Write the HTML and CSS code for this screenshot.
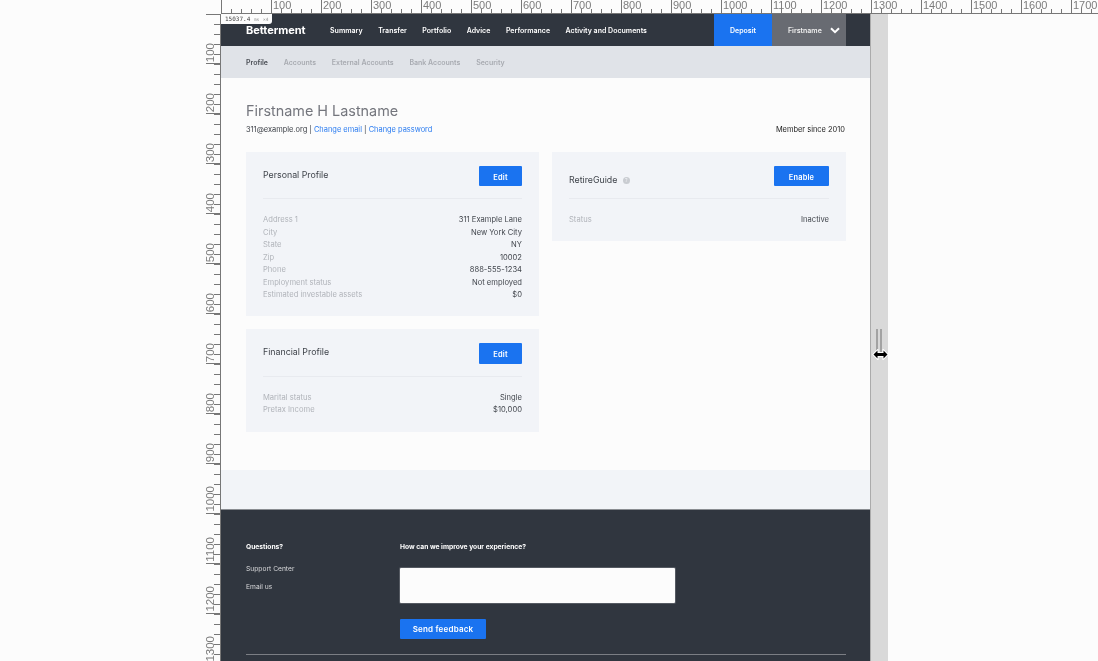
FILE: index.html
```html
<!DOCTYPE html>
<html lang="en">
<head>
<meta charset="utf-8">
<title>Profile</title>
<link rel="stylesheet" href="styles.css">
</head>
<body>
<div class="screen">
  <div class="corner"></div>
  <div class="ruler-top">
    <span class="rt"></span><span class="rt">100</span><span class="rt">200</span><span class="rt">300</span><span class="rt">400</span><span class="rt">500</span><span class="rt">600</span><span class="rt">700</span><span class="rt">800</span><span class="rt">900</span><span class="rt">1000</span><span class="rt">1100</span><span class="rt">1200</span><span class="rt">1300</span><span class="rt">1400</span><span class="rt">1500</span><span class="rt">1600</span><span class="rt">1700</span>
  </div>
  <div class="ruler-left">
    <span class="rl rl-zero"><b>100</b></span><span class="rl"><b>200</b></span><span class="rl"><b>300</b></span><span class="rl"><b>400</b></span><span class="rl"><b>500</b></span><span class="rl"><b>600</b></span><span class="rl"><b>700</b></span><span class="rl"><b>800</b></span><span class="rl"><b>900</b></span><span class="rl"><b>1000</b></span><span class="rl"><b>1100</b></span><span class="rl"><b>1200</b></span><span class="rl"><b>1300</b></span>
  </div>
  <div class="app">
    <div class="badge">15037.4 <i>ms</i> <i>×4</i></div>
    <header class="topbar">
      <div class="logo">Betterment</div>
      <nav class="nav"><a>Summary</a><a>Transfer</a><a>Portfolio</a><a>Advice</a><a>Performance</a><a>Activity and Documents</a></nav>
      <a class="deposit">Deposit</a>
      <a class="user">Firstname
        <svg class="chev" width="10" height="7" viewBox="0 0 10 7"><path d="M1 1.2 5 5.2 9 1.2" fill="none" stroke="#fff" stroke-width="2"/></svg>
      </a>
    </header>
    <div class="subnav"><a class="on">Profile</a><a>Accounts</a><a>External Accounts</a><a>Bank Accounts</a><a>Security</a></div>
    <main class="main">
      <h1 class="name">Firstname H Lastname</h1>
      <div class="meta">
        <div>311@example.org | <a>Change email</a> | <a>Change password</a></div>
        <div class="since">Member since 2010</div>
      </div>
      <div class="cols">
        <div class="col">
          <section class="card">
            <div class="card-head"><h2>Personal Profile</h2><button class="btn">Edit</button></div>
            <dl class="rows">
              <div class="row"><dt>Address 1</dt><dd>311 Example Lane</dd></div>
              <div class="row"><dt>City</dt><dd>New York City</dd></div>
              <div class="row"><dt>State</dt><dd>NY</dd></div>
              <div class="row"><dt>Zip</dt><dd>10002</dd></div>
              <div class="row"><dt>Phone</dt><dd>888-555-1234</dd></div>
              <div class="row"><dt>Employment status</dt><dd>Not employed</dd></div>
              <div class="row"><dt>Estimated investable assets</dt><dd>$0</dd></div>
            </dl>
          </section>
          <section class="card card-fin">
            <div class="card-head tall"><h2>Financial Profile</h2><button class="btn">Edit</button></div>
            <dl class="rows">
              <div class="row"><dt>Marital status</dt><dd>Single</dd></div>
              <div class="row"><dt>Pretax Income</dt><dd>$10,000</dd></div>
            </dl>
          </section>
        </div>
        <div class="col">
          <section class="card">
            <div class="card-head"><h2 class="low">RetireGuide <span class="help">?</span></h2><button class="btn wide">Enable</button></div>
            <dl class="rows">
              <div class="row"><dt>Status</dt><dd>Inactive</dd></div>
            </dl>
          </section>
        </div>
      </div>
    </main>
    <div class="strip"></div>
    <footer class="footer">
      <div class="foot-left">
        <h3>Questions?</h3>
        <a>Support Center</a>
        <a>Email us</a>
      </div>
      <div class="foot-right">
        <h3>How can we improve your experience?</h3>
        <div class="textarea"></div>
        <button class="btn send">Send feedback</button>
      </div>
      <div class="foot-line"></div>
    </footer>
  </div>
  <div class="gutter">
    <div class="handle"><span></span><span></span></div>
    <svg class="cursor" width="17" height="11" viewBox="0 0 17 11"><path d="M1.5 5.5 5.5 1.5V4H11.5V1.5L15.5 5.5 11.5 9.5V7H5.5V9.5Z" fill="#000" stroke="#fff" stroke-width="2" paint-order="stroke"/></svg>
  </div>
  <div class="blank"></div>
</div>
</body>
</html>
```
FILE: styles.css
```css
* { box-sizing: border-box; }
html, body { margin: 0; height: 100%; overflow: hidden; background: #fcfcfc; }
body { font-family: Inter, "Liberation Sans", sans-serif; }
h1, h2, h3, dl, dd, dt { margin: 0; font-weight: inherit; font-size: inherit; }
button { border: 0; font-family: inherit; padding: 0; }

.screen {
  display: grid;
  grid-template-columns: 221px 649px 18px 1fr;
  grid-template-rows: 14px 647px;
  width: 1098px;
  height: 661px;
  overflow: hidden;
  will-change: transform;
}

/* Rulers */
.corner { background: #fcfcfc; }
.ruler-top {
  grid-column: 2 / 5;
  display: flex;
  border-bottom: 1px solid #777;
  background: repeating-linear-gradient(90deg, #777 0 1px, transparent 1px 10px) bottom left / 100% 4px no-repeat;
  overflow: hidden;
}
.rt {
  flex: 0 0 50px;
  border-left: 1px solid #777;
  padding-left: 1px;
  font: 11px/11px "Liberation Sans", sans-serif;
  color: #7c7c7c;
  height: 13px;
}
.ruler-left {
  display: flex;
  flex-direction: column;
  border-right: 1px solid #777;
  height: 661px;
  overflow: hidden;
  background: repeating-linear-gradient(180deg, #777 0 1px, transparent 1px 10px) top right / 6px 100% no-repeat;
}
.rl {
  flex: 0 0 50px;
  display: flex;
  justify-content: flex-end;
  align-items: flex-end;
  padding-right: 4px;
  border-bottom: 1px solid #777;
  margin-left: 206px;
  width: 14px;
}
.rl-zero { border-top: 1px solid #777; }
.rl b {
  writing-mode: vertical-rl;
  transform: rotate(180deg);
  font: 400 11.5px/11px "Liberation Sans", sans-serif;
  color: #7c7c7c;
  padding-top: 1px;
}

/* App */
.app { position: relative; display: flex; flex-direction: column; background: #fcfcfc; }
.badge {
  position: absolute;
  left: 0; top: 0;
  width: 51px; height: 10px;
  background: #fcfcfc;
  border-bottom-right-radius: 3px;
  font: 6px/10px "DejaVu Sans Mono", monospace;
  color: #444;
  padding-left: 4px;
  white-space: nowrap;
}
.badge i { font-style: normal; color: #999; font-size: 4.5px; }
.topbar {
  flex: 0 0 32px;
  background: #30363f;
  display: flex;
  align-items: center;
  padding-left: 25px;
  padding-right: 24px;
  color: #fff;
  font-weight: 600;
}
.logo { font-size: 11px; font-weight: 700; width: 84px; letter-spacing: -.05px; }
.nav { display: flex; gap: 15.5px; font-size: 7px; flex: 1; letter-spacing: .02px; }
.deposit, .user { align-self: stretch; display: flex; align-items: center; font-size: 7px; }
.deposit { width: 58px; background: #1a73f0; justify-content: center; }
.user { width: 74px; background: #686b72; padding-left: 16px; color: #eee; white-space: nowrap; }
.chev { margin-left: 8px; }

.subnav {
  flex: 0 0 32px;
  background: #e0e3e8;
  display: flex;
  align-items: center;
  gap: 15.8px;
  padding-left: 25px;
  font-size: 7px;
  font-weight: 600;
  color: #a8abb1;
}
.subnav .on { color: #4a4e55; }

.main { flex: 0 0 392px; padding: 24px 25px 0; }
.name { font-size: 14.4px; line-height: 17px; font-weight: 400; color: #74767d; }
.meta { display: flex; justify-content: space-between; font-size: 7.45px; line-height: 10px; margin-top: 6px; color: #3a3e45; }
.meta a { color: #2b7cf0; }
.since { color: #222; }
.cols { display: flex; gap: 13px; margin-top: 17px; }
.col { flex: 0 0 293px; display: flex; flex-direction: column; gap: 13px; }
.col + .col { flex-basis: 294px; }
.card { background: #f2f4f8; padding: 14px 17px 14px; }
.card-fin { padding-bottom: 15px; }
.card-head {
  display: flex;
  justify-content: space-between;
  align-items: flex-start;
  height: 33px;
  border-bottom: 1px solid #e8eaef;
}
.card-head.tall { height: 34px; }
.card-head h2 { font-size: 8.8px; line-height: 18px; color: #3f434a; }
.card-head h2.low { padding-top: 5px; }
.btn { background: #1a73f0; color: #fff; font-weight: 600; font-size: 7.4px; width: 43px; height: 20px; border-radius: 1px; letter-spacing: .2px; padding-top: 2px; }
.card-head.tall .btn { height: 21px; }
.btn.wide { width: 55px; }
.help {
  display: inline-flex; align-items: center; justify-content: center;
  width: 7px; height: 7px; border-radius: 50%;
  background: #c9ccd1; color: #f2f4f8; font-size: 5px; margin-left: 3px; vertical-align: 1px;
}
.rows { padding-top: 15px; font-size: 7.6px; line-height: 12.5px; }
.row { display: flex; justify-content: space-between; }
dt { color: #b1b4ba; }
dd { color: #43474e; }

.strip { flex: 0 0 40px; background: #f2f4f8; border-bottom: 1px solid #8a8d92; }
.footer {
  flex: 1;
  background: #30363f;
  display: grid;
  grid-template-columns: 154px 1fr;
  grid-template-rows: 144px 1px;
  padding: 32px 24px 0 25px;
  color: #fff;
}
.footer h3 { font-size: 6.7px; font-weight: 700; line-height: 10px; }
.foot-left a { display: block; font-size: 6.7px; line-height: 10px; margin-top: 8px; color: #d8d9db; }
.foot-left a:first-of-type { margin-top: 12px; }
.textarea { width: 275px; height: 35px; background: #fcfcfc; margin-top: 16px; border-radius: 1px; box-shadow: 0 0 0 1px #555a62; }
.send { display: block; width: 86px; height: 20px; margin-top: 16px; font-size: 8px; padding-top: 0; }
.foot-line { grid-column: 1 / 3; background: #7b7e84; height: 1px; margin-top: -32px; }

.gutter { position: relative; background: #d9d9d9; border-left: 1px solid #ababab; height: 647px; }
.handle { display: flex; gap: 2px; position: absolute; left: 5px; top: 315px; }
.handle span { width: 2px; height: 23px; background: #a3a3a3; }
.cursor { position: absolute; left: 1px; top: 335px; }
.blank { background: #fcfcfc; }
```
